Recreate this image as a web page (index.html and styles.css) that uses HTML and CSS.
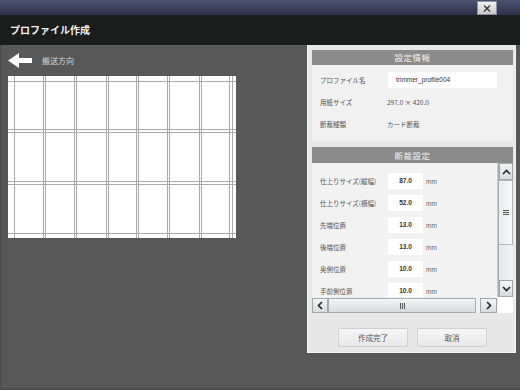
FILE: index.html
```html
<!DOCTYPE html>
<html lang="ja">
<head>
<meta charset="utf-8">
<title>プロファイル作成</title>
<link rel="stylesheet" href="styles.css">
</head>
<body>
<div class="topbar">
  <div class="close">
    <svg width="8" height="7" viewBox="0 0 8 7"><path d="M1 0.5 L7 6.5 M7 0.5 L1 6.5" stroke="#3a3a3a" stroke-width="1.4"/></svg>
  </div>
</div>
<div class="titlebar">プロファイル作成</div>
<div class="main">
  <div class="left">
    <div class="direction">
      <svg class="arrow" width="24" height="15" viewBox="0 0 24 15"><path d="M0 7.5 L11 0 L11 5 L24 5 L24 10 L11 10 L11 15 Z" fill="#ffffff"/></svg>
      <span class="dir-label">搬送方向</span>
    </div>
    <div class="sheet">
      <svg width="228" height="162" viewBox="0 0 228 162">
        <g stroke="#a9a9a9" stroke-width="1">
          <line x1="6.5" y1="0" x2="6.5" y2="162"/>
          <line x1="35.5" y1="0" x2="35.5" y2="162"/>
          <line x1="37.5" y1="0" x2="37.5" y2="162"/>
          <line x1="66.5" y1="0" x2="66.5" y2="162"/>
          <line x1="68.5" y1="0" x2="68.5" y2="162"/>
          <line x1="98.5" y1="0" x2="98.5" y2="162"/>
          <line x1="100.5" y1="0" x2="100.5" y2="162"/>
          <line x1="128.5" y1="0" x2="128.5" y2="162"/>
          <line x1="130.5" y1="0" x2="130.5" y2="162"/>
          <line x1="159.5" y1="0" x2="159.5" y2="162"/>
          <line x1="161.5" y1="0" x2="161.5" y2="162"/>
          <line x1="191.5" y1="0" x2="191.5" y2="162"/>
          <line x1="193.5" y1="0" x2="193.5" y2="162"/>
          <line x1="221.5" y1="0" x2="221.5" y2="162"/>
          <line x1="224.5" y1="0" x2="224.5" y2="162"/>
          <line x1="0" y1="5.5" x2="228" y2="5.5"/>
          <line x1="0" y1="53.5" x2="228" y2="53.5"/>
          <line x1="0" y1="56.5" x2="228" y2="56.5"/>
          <line x1="0" y1="105.5" x2="228" y2="105.5"/>
          <line x1="0" y1="108.5" x2="228" y2="108.5"/>
          <line x1="0" y1="157.5" x2="228" y2="157.5"/>
        </g>
      </svg>
    </div>
  </div>
  <div class="panel">
    <div class="sec-head">設定情報</div>
    <div class="info">
      <div class="info-row"><span class="label">プロファイル名</span><span class="text-input">trimmer_profile004</span></div>
      <div class="info-row"><span class="label">用紙サイズ</span><span class="value">297.0 × 420.0</span></div>
      <div class="info-row"><span class="label">断裁種類</span><span class="value">カード断裁</span></div>
    </div>
    <div class="sec-head sec-head-2">断裁設定</div>
    <div class="scroll-area">
      <div class="list">
        <div class="list-row"><span class="label">仕上りサイズ(縦幅)</span><span class="num-input">87.0</span><span class="unit">mm</span></div>
        <div class="list-row"><span class="label">仕上りサイズ(横幅)</span><span class="num-input">52.0</span><span class="unit">mm</span></div>
        <div class="list-row"><span class="label">先端位置</span><span class="num-input">13.0</span><span class="unit">mm</span></div>
        <div class="list-row"><span class="label">後端位置</span><span class="num-input">13.0</span><span class="unit">mm</span></div>
        <div class="list-row"><span class="label">奥側位置</span><span class="num-input">10.0</span><span class="unit">mm</span></div>
        <div class="list-row"><span class="label">手前側位置</span><span class="num-input">10.0</span><span class="unit">mm</span></div>
      </div>
      <div class="vbar">
        <div class="sb-btn v-btn">
          <svg width="9" height="6" viewBox="0 0 9 6"><path d="M1 5 L4.5 1.5 L8 5" fill="none" stroke="#2a2a2a" stroke-width="1.7"/></svg>
        </div>
        <div class="v-track">
          <div class="v-thumb">
            <svg width="6" height="5" viewBox="0 0 6 5"><path d="M0 0.5 H6 M0 2.5 H6 M0 4.5 H6" stroke="#555" stroke-width="1"/></svg>
          </div>
        </div>
        <div class="sb-btn v-btn">
          <svg width="9" height="6" viewBox="0 0 9 6"><path d="M1 1 L4.5 4.5 L8 1" fill="none" stroke="#2a2a2a" stroke-width="1.7"/></svg>
        </div>
      </div>
      <div class="hbar">
        <div class="sb-btn h-btn">
          <svg width="6" height="9" viewBox="0 0 6 9"><path d="M5 1 L1.5 4.5 L5 8" fill="none" stroke="#2a2a2a" stroke-width="1.7"/></svg>
        </div>
        <div class="h-track">
          <svg width="5" height="6" viewBox="0 0 5 6"><path d="M0.5 0 V6 M2.5 0 V6 M4.5 0 V6" stroke="#555" stroke-width="1"/></svg>
        </div>
        <div class="sb-btn h-btn h-btn-right">
          <svg width="6" height="9" viewBox="0 0 6 9"><path d="M1 1 L4.5 4.5 L1 8" fill="none" stroke="#2a2a2a" stroke-width="1.7"/></svg>
        </div>
      </div>
      <div class="corner"></div>
    </div>
    <div class="actions">
      <button class="btn">作成完了</button>
      <button class="btn">取消</button>
    </div>
  </div>
</div>
</body>
</html>
```
FILE: styles.css
```css
* { box-sizing: border-box; }

body {
  margin: 0;
  width: 520px;
  height: 390px;
  overflow: hidden;
  background: #575857;
  font-family: "Noto Sans CJK JP", "Noto Sans", sans-serif;
}

.topbar {
  height: 15px;
  background: linear-gradient(#4a5272, #2c3249);
  display: flex;
  justify-content: flex-end;
  align-items: flex-start;
  padding-right: 23px;
}

.close {
  width: 20px;
  height: 14px;
  margin-top: 1px;
  background: linear-gradient(#f2f2f2, #c6c6c6);
  border: 1px solid #8e93a3;
  display: flex;
  align-items: center;
  justify-content: center;
}

.titlebar {
  height: 30px;
  background: #1b1c1c;
  color: #f0f0f0;
  font-size: 10px;
  font-weight: 700;
  line-height: 30px;
  padding-left: 10px;
}

.main {
  height: 345px;
  display: flex;
  align-items: flex-start;
  padding-left: 8px;
  background: #575857;
  border-left: 2px solid #4d4e4d;
  border-bottom: 2px solid #4c4d4c;
}

.left {
  width: 228px;
  padding-top: 8px;
}

.direction {
  height: 15px;
  display: flex;
  align-items: center;
  gap: 10px;
  margin-bottom: 8px;
  margin-left: -2px;
}

.arrow { display: block; }

.dir-label {
  font-size: 8px;
  color: #d8d8d8;
  line-height: 1;
}

.sheet {
  width: 228px;
  height: 162px;
  background: #ffffff;
  margin-left: -2px;
}

.sheet svg { display: block; }

.panel {
  margin-left: 69px;
  width: 209px;
  height: 308px;
  background: #e8e8e8;
  border: 1px solid #f4f4f4;
  border-top: 0;
  padding: 5px 2px 0 4px;
}

.sec-head {
  height: 15px;
  background: #8b8b8b;
  color: #f2f2f2;
  font-size: 8.5px;
  line-height: 15px;
  text-align: center;
  letter-spacing: 0.5px;
}

.sec-head-2 {
  height: 16px;
  line-height: 16px;
  margin-top: 6px;
}

.info {
  background: #f1f1f1;
  padding: 4px 0 6px 0;
}

.info-row {
  height: 22px;
  display: grid;
  grid-template-columns: 68px auto;
  align-items: center;
  padding-left: 8px;
}

.label {
  font-size: 6.5px;
  color: #555555;
  white-space: nowrap;
}

.text-input {
  width: 109px;
  height: 16px;
  background: #ffffff;
  font-family: "Liberation Sans", "Noto Sans CJK JP", sans-serif;
  font-size: 6.5px;
  color: #333333;
  line-height: 16px;
  padding-left: 8px;
}

.value {
  font-size: 6.5px;
  color: #555555;
  margin-left: -1px;
}

.scroll-area {
  display: grid;
  grid-template-columns: 186px 15px;
  grid-template-rows: 134px 16px;
}

.list {
  background: #f2f2f2;
  overflow: hidden;
  padding-top: 7px;
  border-right: 1px solid #c9c9c9;
}

.list-row {
  height: 22px;
  display: grid;
  grid-template-columns: 68px 35px auto;
  align-items: center;
  padding-left: 8px;
}

.num-input {
  height: 16px;
  background: #ffffff;
  font-family: "Liberation Sans", "Noto Sans", sans-serif;
  font-size: 6.5px;
  font-weight: 700;
  color: #333333;
  line-height: 16px;
  text-align: center;
}

.unit {
  font-family: "Liberation Sans", "Noto Sans", sans-serif;
  font-size: 6.5px;
  color: #666666;
  padding-left: 3px;
}

.vbar {
  display: flex;
  flex-direction: column;
  background: linear-gradient(90deg, #e4e6ea, #f2f3f5);
  border-left: 1px solid #a9abaf;
}

.sb-btn {
  display: flex;
  align-items: center;
  justify-content: center;
  background: linear-gradient(#f3f4f6, #d9dbdf);
  border: 1px solid #a4a6aa;
}

.v-btn { height: 17px; }

.v-track {
  flex: 1;
  padding: 0;
}

.v-thumb {
  height: 65px;
  background: linear-gradient(90deg, #e9ebee, #f7f8f9);
  border: 1px solid #b5b7bb;
  border-left: 0;
  display: flex;
  align-items: center;
  justify-content: center;
}

.hbar {
  display: flex;
  align-items: stretch;
  background: #f1f1f1;
  padding-top: 1px;
}

.h-btn {
  width: 16px;
}

.h-track {
  width: 148px;
  background: linear-gradient(#f4f5f7, #d8dade);
  border: 1px solid #a8aaae;
  display: flex;
  align-items: center;
  justify-content: center;
}

.h-btn-right {
  margin-left: 4px;
  width: 17px;
  margin-right: 1px;
}

.corner {
  background: #ffffff;
}

.actions {
  display: flex;
  justify-content: center;
  gap: 9px;
  padding-top: 15px;
}

.btn {
  width: 70px;
  height: 19px;
  padding: 0;
  background: linear-gradient(#f6f6f6, #e8e8e8);
  border: 1px solid #cfcfcf;
  border-radius: 1px;
  font-family: "Noto Sans CJK JP", sans-serif;
  font-size: 7.5px;
  color: #555555;
}
```
